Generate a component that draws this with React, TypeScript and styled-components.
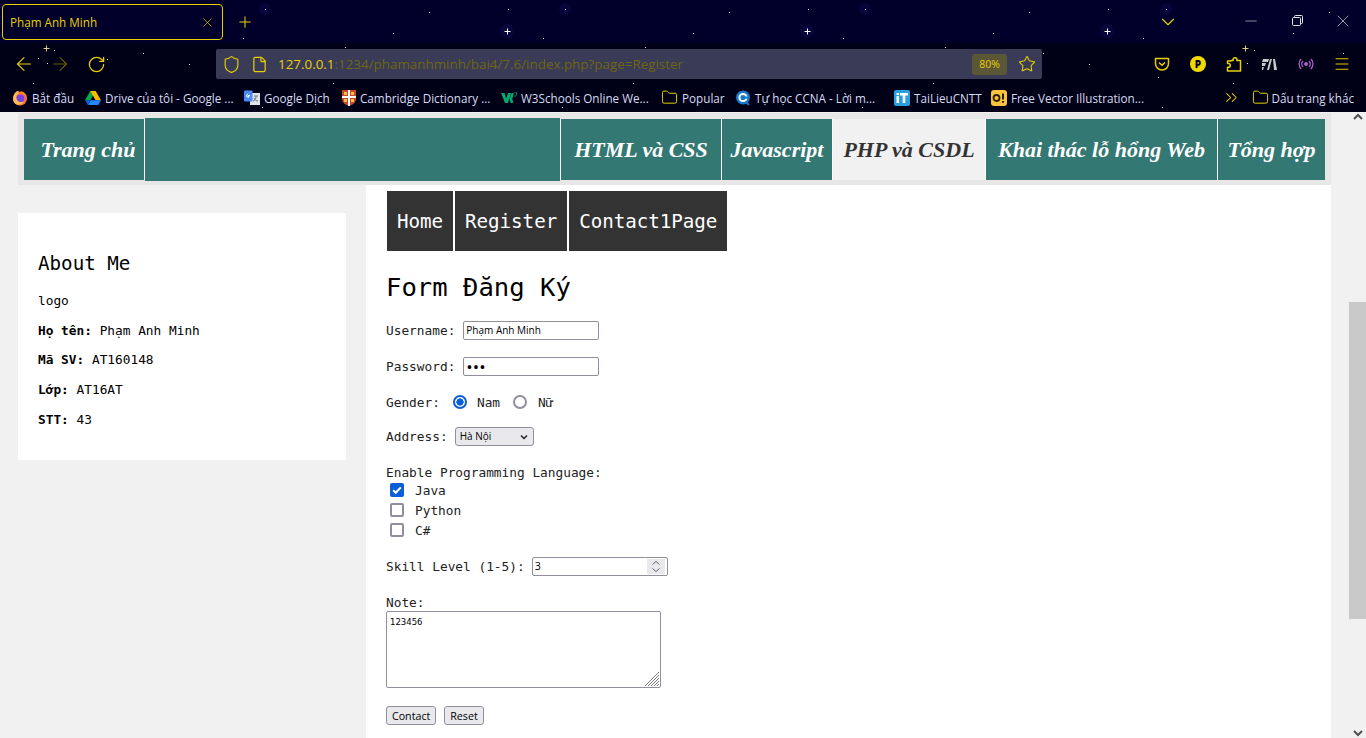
import React from "react";
import styled, { createGlobalStyle } from "styled-components";
import { ArrowLeft, ArrowRight, RotateCw, Shield, File, Star, Menu, X, Plus, ChevronDown, Minus, ChevronsRight, Folder } from "lucide-react";

const Y = "#e8d000";
const Global = createGlobalStyle`
  html, body { margin: 0; padding: 0; height: 100%; overflow: hidden; background: #f1f1f1; }
  * { box-sizing: border-box; }
`;
const Window = styled.div`width: 1366px; height: 738px; display: flex; flex-direction: column; overflow: hidden;`;
const Chrome = styled.header`position: relative; height: 112px; background: #000016; font-family: "Open Sans", "Noto Sans", sans-serif; flex: none;`;
const Sky = styled.svg`position: absolute; inset: 0; pointer-events: none;`;
const TitleBar = styled.div`position: relative; height: 43px; background: #00002a; display: flex; align-items: flex-start; padding: 4px 0 0 2px;`;
const Tab = styled.div`width: 221px; height: 36px; border: 1px solid ${Y}; border-radius: 4px; display: flex; align-items: center; justify-content: space-between; padding: 0 7px 0 7px; color: ${Y}; font-size: 11.7px; background: #00002a;`;
const NewTab = styled.div`width: 44px; height: 36px; display: flex; align-items: center; justify-content: center; color: ${Y};`;
const Spacer = styled.div`flex: 1;`;
const ListAll = styled.div`width: 36px; height: 36px; margin-right: 42px; display: flex; align-items: center; justify-content: center; color: ${Y};`;
const WinBtn = styled.div`width: 46px; height: 32px; margin-top: -4px; display: flex; align-items: center; justify-content: center; color: #e4e4e4; padding-top: 9px;`;
const ToolBar = styled.div`position: relative; height: 42px; display: flex; align-items: center; padding: 0 6px;`;
const ToolBtn = styled.div<{ $dim?: boolean }>`width: 36px; height: 36px; display: flex; align-items: center; justify-content: center; color: ${p => p.$dim ? "#6b6000" : Y}; flex: none;`;
const UrlBar = styled.div`width: 826px; height: 30px; margin-left: 102px; margin-right: 102px; background: #3a3b57; border-radius: 2px; display: flex; align-items: center; color: ${Y};`;
const UrlIcon = styled.div<{ $w: number }>`width: ${p => p.$w}px; display: flex; justify-content: center; flex: none; color: ${Y};`;
const Url = styled.div`font-size: 13.4px; flex: 1; margin-left: 6px; color: #6f6511; white-space: nowrap;`;
const UrlHost = styled.span`color: ${Y};`;
const Zoom = styled.div`width: 35px; height: 21px; border-radius: 3px; background: #5a5636; font-size: 10.5px; display: flex; align-items: center; justify-content: center; margin-right: 5px;`;
const PBadge = styled.div`width: 16px; height: 16px; border-radius: 50%; background: #f2d900; color: #000016; font-size: 10px; font-weight: 800; display: flex; align-items: center; justify-content: center;`;
const BookBar = styled.div`position: relative; height: 27px; display: flex; align-items: center; padding: 0 12px 2px; color: #d6dcf2; font-size: 11.7px;`;
const Book = styled.div<{ $w: number }>`width: ${p => p.$w}px; flex: none; display: flex; align-items: center; gap: 4px; white-space: nowrap; overflow: hidden;`;
const BookFolder = styled(Folder)`margin: 0 0 0 -1px; flex: none;`;
const BookRight = styled.div`margin-left: auto; display: flex; align-items: center; gap: 2px; white-space: nowrap;`;
const More = styled.div`color: ${Y}; width: 29px; display: flex;`;

const Viewport = styled.div`flex: 1; display: flex; min-height: 0; background: #f1f1f1; font-family: "DejaVu Sans Mono", "Liberation Mono", monospace;`;
const Page = styled.main`width: 1349px; padding: 1px 18px 0; overflow: hidden;`;
const Scrollbar = styled.div`width: 17px; position: relative; background: #f1f1f1; color: #505050;`;
const Thumb = styled.div`position: absolute; left: 0; right: 0; top: 190px; height: 317px; background: #c9c9c9;`;
const ScrollArrow = styled.div<{ $bottom?: boolean }>`position: absolute; left: 0; right: 0; ${p => p.$bottom ? "bottom: 1px;" : "top: 1px;"} display: flex; justify-content: center;`;

const NavBand = styled.nav`height: 72px; background: #e7e7e7; padding: 6px 6px 0;`;
const NavRow = styled.div`height: 61px; display: flex; gap: 1px; background: #fff;`;
const NavItem = styled.a<{ $w: number; $active?: boolean; $pl?: number }>`width: ${p => p.$w}px; padding-left: ${p => p.$pl ?? 0}px; flex: none; display: flex; align-items: center; justify-content: center; background: ${p => p.$active ? "#f1f1f1" : "#337873"}; color: ${p => p.$active ? "#333" : "#fff"}; font-family: "Liberation Serif", serif; font-style: italic; font-weight: 700; font-size: 22px; white-space: nowrap;`;
const NavFill = styled.div`width: 415px; flex: none; background: #337873; margin: -1px 0;`;

const Columns = styled.div`display: grid; grid-template-columns: 328px 965px; column-gap: 20px; align-items: start;`;
const Card = styled.aside`margin-top: 28px; height: 247px; background: #fff; padding: 40px 20px 0;`;
const CardTitle = styled.h2`margin: 0 0 19px; font-size: 19.2px; font-weight: 400; line-height: 22px; color: #000;`;
const CardLine = styled.p`margin: 0 0 14.9px; font-size: 12.8px; line-height: 14.8px; color: #000;`;
const Content = styled.section`background: #fff; height: 553px; padding: 6px 20px 0 20px; font-size: 12.8px; color: #222;`;
const SubNav = styled.div`display: inline-flex; gap: 2px; height: 60px; margin-left: 1px;`;
const SubItem = styled.a`background: #333; color: #fff; display: flex; align-items: center; padding: 0 10px; font-size: 19.2px; letter-spacing: -0.04px;`;
const Title = styled.h1`margin: 21px 0 0; font-size: 25.6px; font-weight: 400; line-height: 30px; color: #000;`;
const Row = styled.div<{ $mt: number }>`display: flex; align-items: center; height: 20px; margin-top: ${p => p.$mt}px; white-space: pre;`;
const Stack = styled.div<{ $mt: number }>`margin-top: ${p => p.$mt}px;`;
const Text = styled.span<{ $ml?: number }>`margin-left: ${p => p.$ml ?? 0}px;`;
const TextInput = styled.input`width: 136px; height: 19px; margin-left: 8px; border: 1px solid #8f8f9d; border-radius: 2px; padding: 1px 2px; font: 10px "Open Sans", sans-serif; color: #000; background: #fff;`;
const PasswordInput = styled(TextInput)`font-size: 17px; padding: 0 2px;`;
const Radio = styled.input<{ $ml: number }>`appearance: none; width: 14px; height: 14px; margin: 0 0 0 ${p => p.$ml}px; border-radius: 50%; border: 2px solid #8f8f9d; background: #fff; &:checked { border: 2px solid #0a5fd8; background: radial-gradient(circle, #0a5fd8 0 3.4px, #fff 3.9px); }`;
const Select = styled.select`appearance: none; width: 79px; height: 19px; margin-left: 7px; border: 1px solid #8f8f9d; border-radius: 3px; padding: 0 0 0 4px; font: 10px "Open Sans", sans-serif; color: #000; background: #e9e9ed url("data:image/svg+xml,%3Csvg xmlns='http://www.w3.org/2000/svg' width='8' height='6'%3E%3Cpath d='M1 1.5l3 3 3-3' fill='none' stroke='%23222' stroke-width='1.5'/%3E%3C/svg%3E") no-repeat 64px 6px;`;
const CheckRow = styled.label`display: flex; align-items: center; height: 20px; padding-left: 4px; gap: 11px;`;
const Check = styled.input`appearance: none; width: 14px; height: 14px; margin: 0; border: 2px solid #8f8f9d; border-radius: 2px; background: #fff; &:checked { border: 0; background: #0a5fd8 url("data:image/svg+xml,%3Csvg xmlns='http://www.w3.org/2000/svg' width='14' height='14'%3E%3Cpath d='M3.2 7.2l2.6 2.6 5-5.4' fill='none' stroke='%23fff' stroke-width='2'/%3E%3C/svg%3E") center no-repeat; }`;
const NumberWrap = styled.div`position: relative; width: 136px; height: 19px; margin-left: 7px;`;
const NumberInput = styled.input`width: 100%; height: 100%; border: 1px solid #8f8f9d; border-radius: 2px; padding: 1px 2px; font: 10.67px "Open Sans", sans-serif; color: #000; appearance: textfield;`;
const Spin = styled.div`position: absolute; right: 3px; top: 2px; width: 18px; height: 15px; background: #e9e9ed; color: #666; display: flex; align-items: center; justify-content: center;`;
const NoteLabel = styled.div`height: 15px; line-height: 15px;`;
const AreaWrap = styled.div`position: relative; width: 275px; height: 77px; margin-top: 1px;`;
const Area = styled.textarea`display: block; width: 100%; height: 100%; resize: none; border: 1px solid #8f8f9d; border-radius: 2px; padding: 5px 3px 2px; font: 8.5px "DejaVu Sans", sans-serif; color: #000; background: #fff;`;
const Grip = styled.svg`position: absolute; right: 2px; bottom: 2px;`;
const Buttons = styled.div`display: flex; gap: 8px; margin-top: 18px;`;
const Btn = styled.button`height: 19px; padding: 0 5px; border: 1px solid #8f8f9d; border-radius: 3px; background: #e9e9ed; color: #000; font: 10.67px "Open Sans", sans-serif;`;

const dots = [[243,38],[429,12],[393,33],[54,50],[38,58],[47,63],[143,53],[107,59],[189,64],[33,83],[345,47],[333,83],[262,107],[508,9],[729,12],[808,9],[543,38],[693,33],[843,38],[645,47],[633,83],[562,107],[862,107],[1029,12],[1108,9],[1329,12],[993,33],[1143,38],[1293,33],[945,47],[1254,50],[1247,63],[1343,53],[1043,53],[1089,64],[1158,77],[933,83],[1233,83],[1162,107]];
const halos = [[265,9],[565,9],[865,9],[1166,9]];
const plusses = [[507,31],[807,31],[1107,31]];
const dimPlus = [[46,48],[1245,48]];

const Stars = () => (
  <Sky width="1366" height="112">
    {halos.map(([x,y]) => <g key={x}><circle cx={x} cy={y} r="6" fill="#06063a"/><rect x={x} y={y} width="1" height="1" fill="#fff"/></g>)}
    {plusses.map(([x,y]) => <g key={x}><circle cx={x} cy={y} r="7" fill="#06063a"/><path d={`M${x-2.5} ${y+.5}h6M${x+.5} ${y-2.5}v6`} stroke="#fff"/></g>)}
    {dimPlus.map(([x,y]) => <path key={x} d={`M${x-2.5} ${y+.5}h6M${x+.5} ${y-2.5}v6`} stroke="#d8cf90"/>)}
    {dots.map(([x,y]) => <rect key={`${x}-${y}`} x={x} y={y} width="1" height="1" fill="#f0efc0"/>)}
  </Sky>
);

const Firefox = () => (<svg width="16" height="16" viewBox="0 0 16 16"><circle cx="8" cy="8.5" r="7" fill="#ff7139"/><circle cx="8.4" cy="8.4" r="4" fill="#7542e5"/><path d="M2 5C3 2 5 1 7 .8 6 2 6 3 7 4 5 4 3.500 6 4.500 9 5.500 12 9 13 12 11.500 10 15 5 16 2.500 13 .5 10.500 1 7 2 5z" fill="#ffbd4f"/><path d="M9 1c3 1 5 3 6 6-1-2-3-3.500-5-3.500z" fill="#ff980e"/></svg>);
const Drive = () => (<svg width="16" height="14" viewBox="0 0 16 14"><path d="M5.300 0h5.400l-5.300 9.200H0z" fill="#00ac47"/><path d="M5.300 0h5.400l5.300 9.200h-5.400z" fill="#ffba00"/><path d="M3 14l2.600-4.700H16L13.300 14z" fill="#2684fc"/><path d="M0 9.300h5.500L3 14z" fill="#0066da"/></svg>);
const Translate = () => (<svg width="16" height="16" viewBox="0 0 16 16"><rect x="6" y="3" width="10" height="12" fill="#dfe3ea"/><path d="M10 6h4M12 6v1c0 2-2 4-3 4m1-3c1 2 2 3 4 3" stroke="#6b7280" fill="none"/><path d="M0 1.500A1 1 0 011 .5h7.500v11H1a1 1 0 01-1-1z" fill="#4a8af4"/><path d="M6 5.500H4v1.200h1.200A1.500 1.500 0 114 4.300" stroke="#fff" fill="none"/></svg>);
const Cambridge = () => (<svg width="14" height="16" viewBox="0 0 14 16"><path d="M0 0h14v9c0 4-4 6-7 7-3-1-7-3-7-7z" fill="#c8452f"/><path d="M7 0v16M0 7h14" stroke="#fff" strokeWidth="2"/><path d="M2 2h3v3H2zM9 2h3v3H9zM2 9h3v3H2zM9 9h3v3H9z" fill="#f0c040"/></svg>);
const W3 = () => (<svg width="16" height="12" viewBox="0 0 16 12"><path d="M0 1h3.500l1.700 5.500L7 1h3l-3 10H4zM8.500 7l2-6h2.300l-1.500 6 1 4H9.600z" fill="#04aa6d"/><path d="M13 0h3v1l-1 1c1 0 1 3-2 2" fill="none" stroke="#04aa6d" strokeWidth=".8"/></svg>);
const CCircle = () => (<svg width="16" height="16" viewBox="0 0 16 16"><circle cx="8" cy="7.500" r="7" fill="#1678c8"/><circle cx="8" cy="7.500" r="3.600" fill="none" stroke="#fff" strokeWidth="2"/><rect x="10" y="6.500" width="4" height="2.200" fill="#1678c8"/><path d="M11 12l3 3" stroke="#1678c8" strokeWidth="2"/></svg>);
const ITLogo = () => (<svg width="16" height="16" viewBox="0 0 16 16"><rect width="16" height="16" rx="2" fill="#2a9fe0"/><path d="M2.500 6h2.500v7H2.500zM2.500 3h2.500v2H2.500zM6 3h8v2.500h-2.700V13H8.700V5.500H6z" fill="#fff"/></svg>);
const OBang = () => (<svg width="16" height="16" viewBox="0 0 16 16"><rect width="16" height="16" rx="3" fill="#fdc33c"/><circle cx="5.500" cy="8" r="3" fill="none" stroke="#2a2000" strokeWidth="1.800"/><path d="M12 3.500v6M12 11v1.800" stroke="#2a2000" strokeWidth="2"/></svg>);
const Pocket = () => (<svg width="16" height="16" viewBox="0 0 16 16" fill="none" stroke={Y} strokeWidth="1.500"><path d="M1.500 2.500h13v5a6.500 6.500 0 01-13 0z" strokeLinejoin="round"/><path d="M5 6.500l3 2.800 3-2.800"/></svg>);
const PuzzlePiece = () => (<svg width="16" height="16" viewBox="0 0 16 16" fill="none" stroke={Y} strokeWidth="1.500" strokeLinejoin="round"><path d="M5 4.500h2.200a2 2 0 113.600 0H14.500V15H1.500v-3.800h1a1.800 1.800 0 000-3.600h-1V5h3.500z"/></svg>);
const Wapp = () => (<svg width="16" height="14" viewBox="0 0 16 14" fill="#c9c9c9"><path d="M1 2h6L6 5H0zM0 6h4L3 9H0zM0 10h2l-1 3H0zM8 2h2L7 13H5zM11 2h2l2 11h-3z"/></svg>);
const Radiate = () => (<svg width="16" height="14" viewBox="0 0 16 14" fill="none" stroke="#b063d0" strokeWidth="1.200"><circle cx="8" cy="7" r="1.300" fill="#b063d0"/><path d="M5 4a4.500 4.500 0 000 6M11 4a4.500 4.500 0 010 6M3 2a7.500 7.500 0 000 10M13 2a7.500 7.500 0 010 10"/></svg>);

export default function App() {
  return (
    <Window>
      <Global />
      <Chrome>
        <TitleBar>
          <Tab><span>Phạm Anh Minh</span><X size={15} strokeWidth={1.1} /></Tab>
          <NewTab><Plus size={18} strokeWidth={1.4} /></NewTab>
          <Spacer />
          <ListAll><ChevronDown size={22} strokeWidth={1.2} /></ListAll>
          <WinBtn><Minus size={18} strokeWidth={0.8} /></WinBtn>
          <WinBtn><svg width="11" height="11" viewBox="0 0 11 11" fill="none" stroke="#e4e4e4"><rect x=".5" y="2.500" width="8" height="8" rx="1"/><path d="M2.500 2.500V1.500a1 1 0 011-1h6a1 1 0 011 1v6a1 1 0 01-1 1h-1"/></svg></WinBtn>
          <WinBtn><X size={20} strokeWidth={0.8} /></WinBtn>
        </TitleBar>
        <ToolBar>
          <ToolBtn><ArrowLeft size={22} strokeWidth={1.2} /></ToolBtn>
          <ToolBtn $dim><ArrowRight size={22} strokeWidth={1.2} /></ToolBtn>
          <ToolBtn><RotateCw size={19} strokeWidth={1.6} /></ToolBtn>
          <UrlBar>
            <UrlIcon $w={30}><Shield size={19} strokeWidth={1.4} /></UrlIcon>
            <UrlIcon $w={26}><File size={17} strokeWidth={1.7} /></UrlIcon>
            <Url><UrlHost>127.0.0.1</UrlHost>:1234/phamanhminh/bai4/7.6/index.php?page=Register</Url>
            <Zoom>80%</Zoom>
            <UrlIcon $w={30}><Star size={18} strokeWidth={1.4} /></UrlIcon>
          </UrlBar>
          <ToolBtn><Pocket /></ToolBtn>
          <ToolBtn><PBadge>P</PBadge></ToolBtn>
          <ToolBtn><PuzzlePiece /></ToolBtn>
          <ToolBtn><Wapp /></ToolBtn>
          <ToolBtn><Radiate /></ToolBtn>
          <ToolBtn><Menu size={18} strokeWidth={1.3} /></ToolBtn>
        </ToolBar>
        <BookBar>
          <Book $w={73}><Firefox />Bắt đầu</Book>
          <Book $w={159}><Drive />Drive của tôi - Google ...</Book>
          <Book $w={98}><Translate />Google Dịch</Book>
          <Book $w={159}><Cambridge />Cambridge Dictionary ...</Book>
          <Book $w={161}><W3 />W3Schools Online We...</Book>
          <Book $w={73}><BookFolder size={17} color={Y} strokeWidth={1.4} />Popular</Book>
          <Book $w={159}><CCircle />Tự học CCNA - Lời m...</Book>
          <Book $w={97}><ITLogo />TaiLieuCNTT</Book>
          <Book $w={160}><OBang />Free Vector Illustration...</Book>
          <BookRight>
            <More><ChevronsRight size={19} strokeWidth={1.3} /></More>
            <BookFolder size={17} color={Y} strokeWidth={1.4} />Dấu trang khác
          </BookRight>
        </BookBar>
        <Stars />
      </Chrome>
      <Viewport>
        <Page>
          <NavBand>
            <NavRow>
              <NavItem $w={120} $pl={8}>Trang chủ</NavItem>
              <NavFill />
              <NavItem $w={160}>HTML và CSS</NavItem>
              <NavItem $w={110}>Javascript</NavItem>
              <NavItem $w={152} $active>PHP và CSDL</NavItem>
              <NavItem $w={231}>Khai thác lỗ hổng Web</NavItem>
              <NavItem $w={107}>Tổng hợp</NavItem>
            </NavRow>
          </NavBand>
          <Columns>
            <Card>
              <CardTitle>About Me</CardTitle>
              <CardLine>logo</CardLine>
              <CardLine><b>Họ tên:</b> Phạm Anh Minh</CardLine>
              <CardLine><b>Mã SV:</b> AT160148</CardLine>
              <CardLine><b>Lớp:</b> AT16AT</CardLine>
              <CardLine><b>STT:</b> 43</CardLine>
            </Card>
            <Content>
              <SubNav>
                <SubItem>Home</SubItem>
                <SubItem>Register</SubItem>
                <SubItem>Contact1Page</SubItem>
              </SubNav>
              <Title>Form Đăng Ký</Title>
              <Row $mt={18}>Username:<TextInput defaultValue="Phạm Anh Minh" /></Row>
              <Row $mt={16}>Password:<PasswordInput type="password" defaultValue="123" /></Row>
              <Row $mt={16}>Gender:<Radio $ml={13} type="radio" name="g" defaultChecked /><Text $ml={10}>Nam</Text><Radio $ml={13} type="radio" name="g" /><Text $ml={11}>Nữ</Text></Row>
              <Row $mt={14}>Address:<Select defaultValue="Hà Nội"><option>Hà Nội</option></Select></Row>
              <Stack $mt={16}>
                <Row $mt={0}>Enable Programming Language:</Row>
                <Stack $mt={-2}>
                  <CheckRow><Check type="checkbox" defaultChecked />Java</CheckRow>
                  <CheckRow><Check type="checkbox" />Python</CheckRow>
                  <CheckRow><Check type="checkbox" />C#</CheckRow>
                </Stack>
              </Stack>
              <Row $mt={16}>Skill Level (1-5):<NumberWrap><NumberInput type="number" defaultValue={3} /><Spin><svg width="10" height="13" viewBox="0 0 10 13" fill="none" stroke="currentColor"><path d="M1.500 4.500L5 1.500l3.500 3M1.500 8.500l3.500 3 3.500-3"/></svg></Spin></NumberWrap></Row>
              <Stack $mt={19}>
                <NoteLabel>Note:</NoteLabel>
                <AreaWrap>
                  <Area defaultValue="123456" />
                  <Grip width="14" height="14" viewBox="0 0 14 14" stroke="#777"><path d="M0 14L14 0M3 14L14 3M6 14l8-8M9 14l5-5M12 14l2-2"/></Grip>
                </AreaWrap>
              </Stack>
              <Buttons><Btn>Contact</Btn><Btn>Reset</Btn></Buttons>
            </Content>
          </Columns>
        </Page>
        <Scrollbar>
          <ScrollArrow><svg width="10" height="8" viewBox="0 0 10 8" fill="none" stroke="currentColor" strokeWidth="2"><path d="M1 6l4-4 4 4"/></svg></ScrollArrow>
          <Thumb />
          <ScrollArrow $bottom><svg width="10" height="8" viewBox="0 0 10 8" fill="none" stroke="currentColor" strokeWidth="2"><path d="M1 2l4 4 4-4"/></svg></ScrollArrow>
        </Scrollbar>
      </Viewport>
    </Window>
  );
}
